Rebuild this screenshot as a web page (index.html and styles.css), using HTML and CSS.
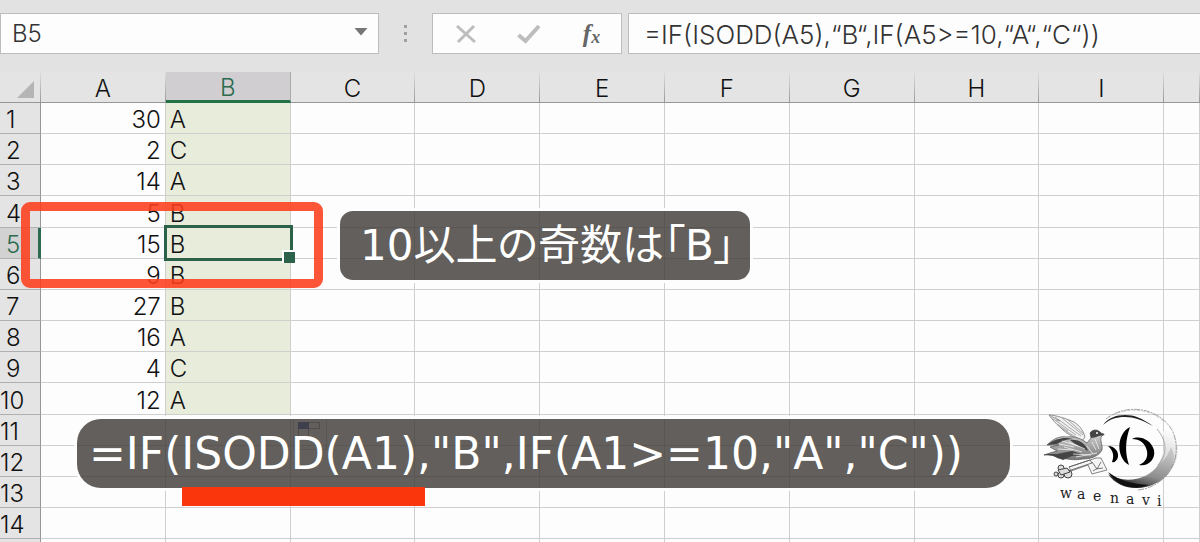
FILE: index.html
```html
<!DOCTYPE html>
<html lang="ja">
<head>
<meta charset="utf-8">
<title>ISODD</title>
<link rel="stylesheet" href="styles.css">
</head>
<body>
<header class="toolbar">
  <div class="namebox">
    <input class="namebox-input" type="text" value="B5" aria-label="名前ボックス">
    <button class="namebox-arrow" type="button" aria-label="一覧"><svg width="14" height="8" viewBox="0 0 14 8"><path d="M0.500 0H13.500L7 7.500Z" fill="#767676"/></svg></button>
  </div>
  <div class="grip"><i></i><i></i><i></i></div>
  <div class="actions">
    <button type="button" aria-label="キャンセル"><svg width="22" height="20" viewBox="0 0 22 20"><path d="M2 2L20 18M19 2L3 18" stroke="#bdbdbd" stroke-width="3" fill="none"/></svg></button>
    <button type="button" aria-label="入力"><svg width="24" height="20" viewBox="0 0 24 20"><path d="M1.500 11L8.500 17L22 2" stroke="#bdbdbd" stroke-width="4" fill="none"/></svg></button>
    <button class="fx" type="button" aria-label="関数の挿入">f<sub>x</sub></button>
  </div>
  <input class="formula" type="text" aria-label="数式バー" value="=IF(ISODD(A5),“B“,IF(A5&gt;=10,“A“,“C“))">
</header>
<main class="sheet">
  <table class="grid">
    <colgroup><col class="col-head"><col class="col"><col class="col"><col class="col"><col class="col"><col class="col"><col class="col"><col class="col"><col class="col"><col class="col"><col></colgroup>
    <thead><tr><th class="corner"><svg width="17" height="17" viewBox="0 0 17 17"><path d="M17 0V17H0Z" fill="#b5b5b5"/></svg></th><th>A</th><th class="selected">B</th><th>C</th><th>D</th><th>E</th><th>F</th><th>G</th><th>H</th><th>I</th><th></th></tr></thead>
    <tbody>
      <tr><th>1</th><td class="num">30</td><td class="fill">A</td><td></td><td></td><td></td><td></td><td></td><td></td><td></td><td></td></tr>
      <tr><th>2</th><td class="num">2</td><td class="fill">C</td><td></td><td></td><td></td><td></td><td></td><td></td><td></td><td></td></tr>
      <tr><th>3</th><td class="num">14</td><td class="fill">A</td><td></td><td></td><td></td><td></td><td></td><td></td><td></td><td></td></tr>
      <tr><th>4</th><td class="num">5</td><td class="fill">B</td><td></td><td></td><td></td><td></td><td></td><td></td><td></td><td></td></tr>
      <tr><th class="selected">5</th><td class="num">15</td><td class="fill active">B</td><td></td><td></td><td></td><td></td><td></td><td></td><td></td><td></td></tr>
      <tr><th>6</th><td class="num">9</td><td class="fill">B</td><td></td><td></td><td></td><td></td><td></td><td></td><td></td><td></td></tr>
      <tr><th>7</th><td class="num">27</td><td class="fill">B</td><td></td><td></td><td></td><td></td><td></td><td></td><td></td><td></td></tr>
      <tr><th>8</th><td class="num">16</td><td class="fill">A</td><td></td><td></td><td></td><td></td><td></td><td></td><td></td><td></td></tr>
      <tr><th>9</th><td class="num">4</td><td class="fill">C</td><td></td><td></td><td></td><td></td><td></td><td></td><td></td><td></td></tr>
      <tr><th>10</th><td class="num">12</td><td class="fill">A</td><td></td><td></td><td></td><td></td><td></td><td></td><td></td><td></td></tr>
      <tr><th>11</th><td></td><td></td><td></td><td></td><td></td><td></td><td></td><td></td><td></td><td></td></tr>
      <tr><th>12</th><td></td><td></td><td></td><td></td><td></td><td></td><td></td><td></td><td></td><td></td></tr>
      <tr><th>13</th><td></td><td></td><td></td><td></td><td></td><td></td><td></td><td></td><td></td><td></td></tr>
      <tr><th>14</th><td></td><td></td><td></td><td></td><td></td><td></td><td></td><td></td><td></td><td></td></tr>
      <tr><th></th><td></td><td></td><td></td><td></td><td></td><td></td><td></td><td></td><td></td><td></td></tr>
    </tbody>
  </table>
  <div class="frame"></div>
  <p class="callout note">10以上の奇数は「B」</p>
  <svg class="options" width="34" height="31" viewBox="0 0 34 31"><path d="M.5 0V30.500H33.500V0" fill="none" stroke="#ccc"/><rect x="5" y="3" width="11" height="7" fill="#4a5fae"/><path d="M16 3.500H26.500V9.500H16M5.500 10V17.500H15.500V10" fill="none" stroke="#999"/></svg>
  <p class="callout expression">=IF(ISODD(A1),"B",IF(A1&gt;=10,"A","C"))</p>
  <div class="underline"></div>
  <svg class="logo" width="170" height="130" viewBox="0 0 170 130" role="img" aria-label="waenavi">
    <defs>
      <linearGradient id="ring" x1="0.600" y1="0" x2="0.300" y2="1"><stop offset="0" stop-color="#fff"/><stop offset="0.400" stop-color="#ddd"/><stop offset="0.750" stop-color="#999"/><stop offset="1" stop-color="#111"/></linearGradient>
      <linearGradient id="body" x1="0" y1="0" x2="0" y2="1"><stop offset="0" stop-color="#ddd"/><stop offset="1" stop-color="#777"/></linearGradient>
      <pattern id="hatch" width="2" height="2" patternUnits="userSpaceOnUse" patternTransform="rotate(35)"><path d="M0 1H2" stroke="#666" stroke-width=".5"/></pattern>
    </defs>
    <path d="M133 38C137 30 130 26 138 29C150 42 151 62 141 75C130 94 94 102 78 79C95 90 119 84 128 70C134 60 136 50 133 38Z" fill="url(#ring)"/>
    <path d="M141 52C146 62 144 68 139 76C130 90 110 95 98 90C112 86 122 80 128 70C134 66 138 60 141 52Z" fill="url(#hatch)"/>
    <path d="M76 24C96 8 128 12 142 35C155 62 137 92 108 95" fill="none" stroke="#888" stroke-width=".8" stroke-dasharray="6 1 2 1"/>
    <path d="M83 20C100 12 120 14 133 26" fill="none" stroke="#bbb" stroke-width=".8" stroke-dasharray="3 2"/>
    <path d="M73 30C78 23 86 20 95 20C104 20 112 23 123 31C112 25 104 22 95 22C86 22 80 24 73 30Z" fill="#222"/>
    <path d="M127 34C138 47 137 60 128 70" fill="none" stroke="#999" stroke-width=".8"/>
    <path d="M78 77C87 91 103 96 119 90C102 89 90 86 78 77Z" fill="#111"/>
    <path d="M100 32C86 39 86 63 99 70C95 58 95 46 100 32Z" fill="#000"/>
    <path d="M102 44C110 40 121 45 124 55C126 65 117 72 109 70C116 67 118 62 117 56C115 48 110 44 102 44Z" fill="#000"/>
    <path d="M78 51C85 51 89 57 88 62C87 66 84 68 82 67C84 62 84 56 78 51Z" fill="#000"/>
    <path d="M19 20C26 20 37 24 44 27C50 31 53 35 55 42L52 46C43 42 35 38 30 32C26 29 22 24 19 20Z" fill="#f1f1f1" stroke="#777" stroke-width=".8"/>
    <path d="M19 20L30 26L26 25M22 23L46 40M25 22L51 41M32 23L53 40M38 25L54 39M27 29L38 36M31 33L49 44" stroke="#888" stroke-width=".7" fill="none"/>
    <path d="M17 50C24 43 30 41 37 42C45 41 52 44 57 48L61 43L60 38C63 34 68 34 71 38L74 39L71 42C70 46 73 51 72 55C69 61 61 64 53 64C43 66 34 63 28 63L23 60L14 60L20 58L27 56L20 52L29 50Z" fill="url(#body)" stroke="#555" stroke-width=".7"/>
    <path d="M17 50C26 43 35 42 43 44C36 44 30 47 27 49ZM13 59L27 59L42 56L54 60L42 61L33 65L23 61ZM40 45C49 44 56 49 58 56C52 53 46 50 40 45Z" fill="#444"/>
    <path d="M29 49L44 52M32 46L48 51M28 54L43 55M34 52L52 57M39 47L55 54M43 59L61 60M46 62L67 58M62 47L66 55M65 44L69 54M57 51L63 59" stroke="#f1f1f1" stroke-width=".8" fill="none"/>
    <path d="M60 38C62 34 68 34 71 38L75 40L69 41C66 42 63 43 61 43Z" fill="#444"/><circle cx="67" cy="38" r="1" fill="#fff"/>
    <path d="M39 72L66 63L71 63L77 75L62 79L58 70L41 76Z" fill="#f5f5f5" stroke="#666" stroke-width=".8"/>
    <path d="M39 72L60 65L62 68L41 75M62 67L67 74L71 67M63 76L66 74L73 73" fill="none" stroke="#555" stroke-width=".8"/>
    <g fill="#ddd" stroke="#444" stroke-width="1"><circle cx="31" cy="73" r="3"/><circle cx="26" cy="79" r="2"/><circle cx="31" cy="80" r="3"/><circle cx="38" cy="79" r="4"/><path d="M28 75L37 73L40 77L31 80Z"/></g>
    <text class="logo-text" x="30 47 63 80 96 112 127" y="103 104 106 108 109 110 111">waenavi</text>
  </svg>
</main>
</body>
</html>
```
FILE: styles.css
```css
* { box-sizing: border-box; }
body {
  margin: 0;
  height: 100vh;
  overflow: hidden;
  display: flex;
  flex-direction: column;
  background: #e2e2e2;
  color: #111;
  font-family: Inter, "Liberation Sans", sans-serif;
  font-weight: 300;
}
button, input { font: inherit; color: inherit; border: 0; background: none; padding: 0; margin: 0; }
.toolbar {
  flex: none;
  height: 72px;
  padding: 13px 0 18px;
  display: flex;
}
.namebox {
  width: 379px;
  display: flex;
  background: #fdfdfd;
  border: 1px solid #bdbdbd;
}
.namebox-input { flex: 1; min-width: 0; padding-left: 11px; font-size: 24px; color: #333; }
.namebox-arrow { width: 34px; display: grid; place-items: center; padding-bottom: 4px; }
.grip { width: 53px; display: flex; flex-direction: column; align-items: center; justify-content: center; gap: 4px; }
.grip i { width: 3px; height: 3px; background: #a0a0a0; }
.actions {
  width: 190px;
  margin-right: 6px;
  padding-left: 1px;
  display: grid;
  grid-template-columns: repeat(3, 63px);
  background: #fdfdfd;
  border: 1px solid #bdbdbd;
}
.actions button { display: grid; place-items: center; }
.actions .fx {
  display: block;
  font: italic bold 25px/36px "Liberation Serif", serif;
  color: #666;
}
.fx sub { font-size: 18px; line-height: 0; vertical-align: -1px; }
.formula {
  flex: 1;
  min-width: 0;
  padding: 2px 0 0 15px;
  background: #fdfdfd;
  border: 1px solid #bdbdbd;
  border-right: 0;
  font-size: 26px;
  color: #333;
}
.sheet { position: relative; flex: 1; min-height: 0; overflow: hidden; background: #fdfdfd; }
.grid { width: 100%; table-layout: fixed; border-collapse: separate; border-spacing: 0; font-size: 24px; }
.col-head { width: 41px; }
.col { width: 10.4%; }
.grid th { font-weight: 300; padding: 0; background: #e4e4e4; }
.grid td { padding: 4px 4px 0; line-height: 26px; border: solid #cfcfcf; border-width: 0 1px 1px 0; white-space: nowrap; }
.grid tr { height: 31px; }
.grid tbody tr:nth-child(6n+4) { height: 32px; }
.grid thead th {
  padding-top: 4px;
  line-height: 26px;
  border-bottom: 1px solid #969696;
  border-right: 1px solid;
  border-image: linear-gradient(#e2e2e2, #969696) 1;
}
.grid thead .corner { text-align: right; padding-right: 6px; line-height: 0; }
.grid thead .selected { background: #d0ced0; color: #2b6a4f; border-image: none; border-color: #aaa; border-bottom: 3px solid #217346; line-height: 24px; }
.grid tbody th { text-align: left; padding: 4px 0 0 6px; line-height: 26px; border: solid #969696; border-width: 0 1px 1px 0; border-bottom-color: #b0b0b0; }
.grid tbody tr:nth-child(n+10) th { padding-left: 0; }
.grid tbody .selected { background: #d2d2d2; color: #2b6a4f; border-right: 3px solid #2b6a4f; }
.grid .num { text-align: right; }
.grid .fill { background: #e8ecda; }
.grid .active { position: relative; }
.active::before { content: ""; position: absolute; inset: -3px -3px -3px -2px; border: 3px solid #2c6249; }
.active::after { content: ""; position: absolute; right: -5px; bottom: -5px; width: 11px; height: 11px; background: #2c6249; border: solid #fdfdfd; border-width: 2px 0 0 2px; }
.frame { position: absolute; left: 21px; top: 130px; width: 302px; height: 86px; border: 9px solid rgba(253, 62, 28, .88); border-radius: 9px; }
.callout {
  position: absolute;
  margin: 0;
  height: 69px;
  line-height: 70px;
  font-weight: 400;
  white-space: nowrap;
  color: #fff;
  background: rgba(59, 55, 51, .8);
  box-shadow: 0 0 0 3px #fdfdfd;
}
.note { left: 340px; top: 139px; width: 410px; padding-left: 20px; border-radius: 13px; font-family: "DejaVu Sans", "Noto Sans CJK JP", sans-serif; font-size: 42px; font-feature-settings: "palt"; }
.expression { left: 77px; top: 347px; width: 933px; padding-left: 12px; border-radius: 24px; font-family: "DejaVu Sans", sans-serif; font-size: 44px; }
.options { position: absolute; left: 293px; top: 347px; }
.underline { position: absolute; left: 182px; top: 415px; width: 243px; height: 19px; background: #f9360c; }
.logo { position: absolute; left: 1030px; top: 323px; }
.logo-text { font-family: "DejaVu Serif", serif; font-size: 14px; font-weight: 400; fill: #222; }
```
